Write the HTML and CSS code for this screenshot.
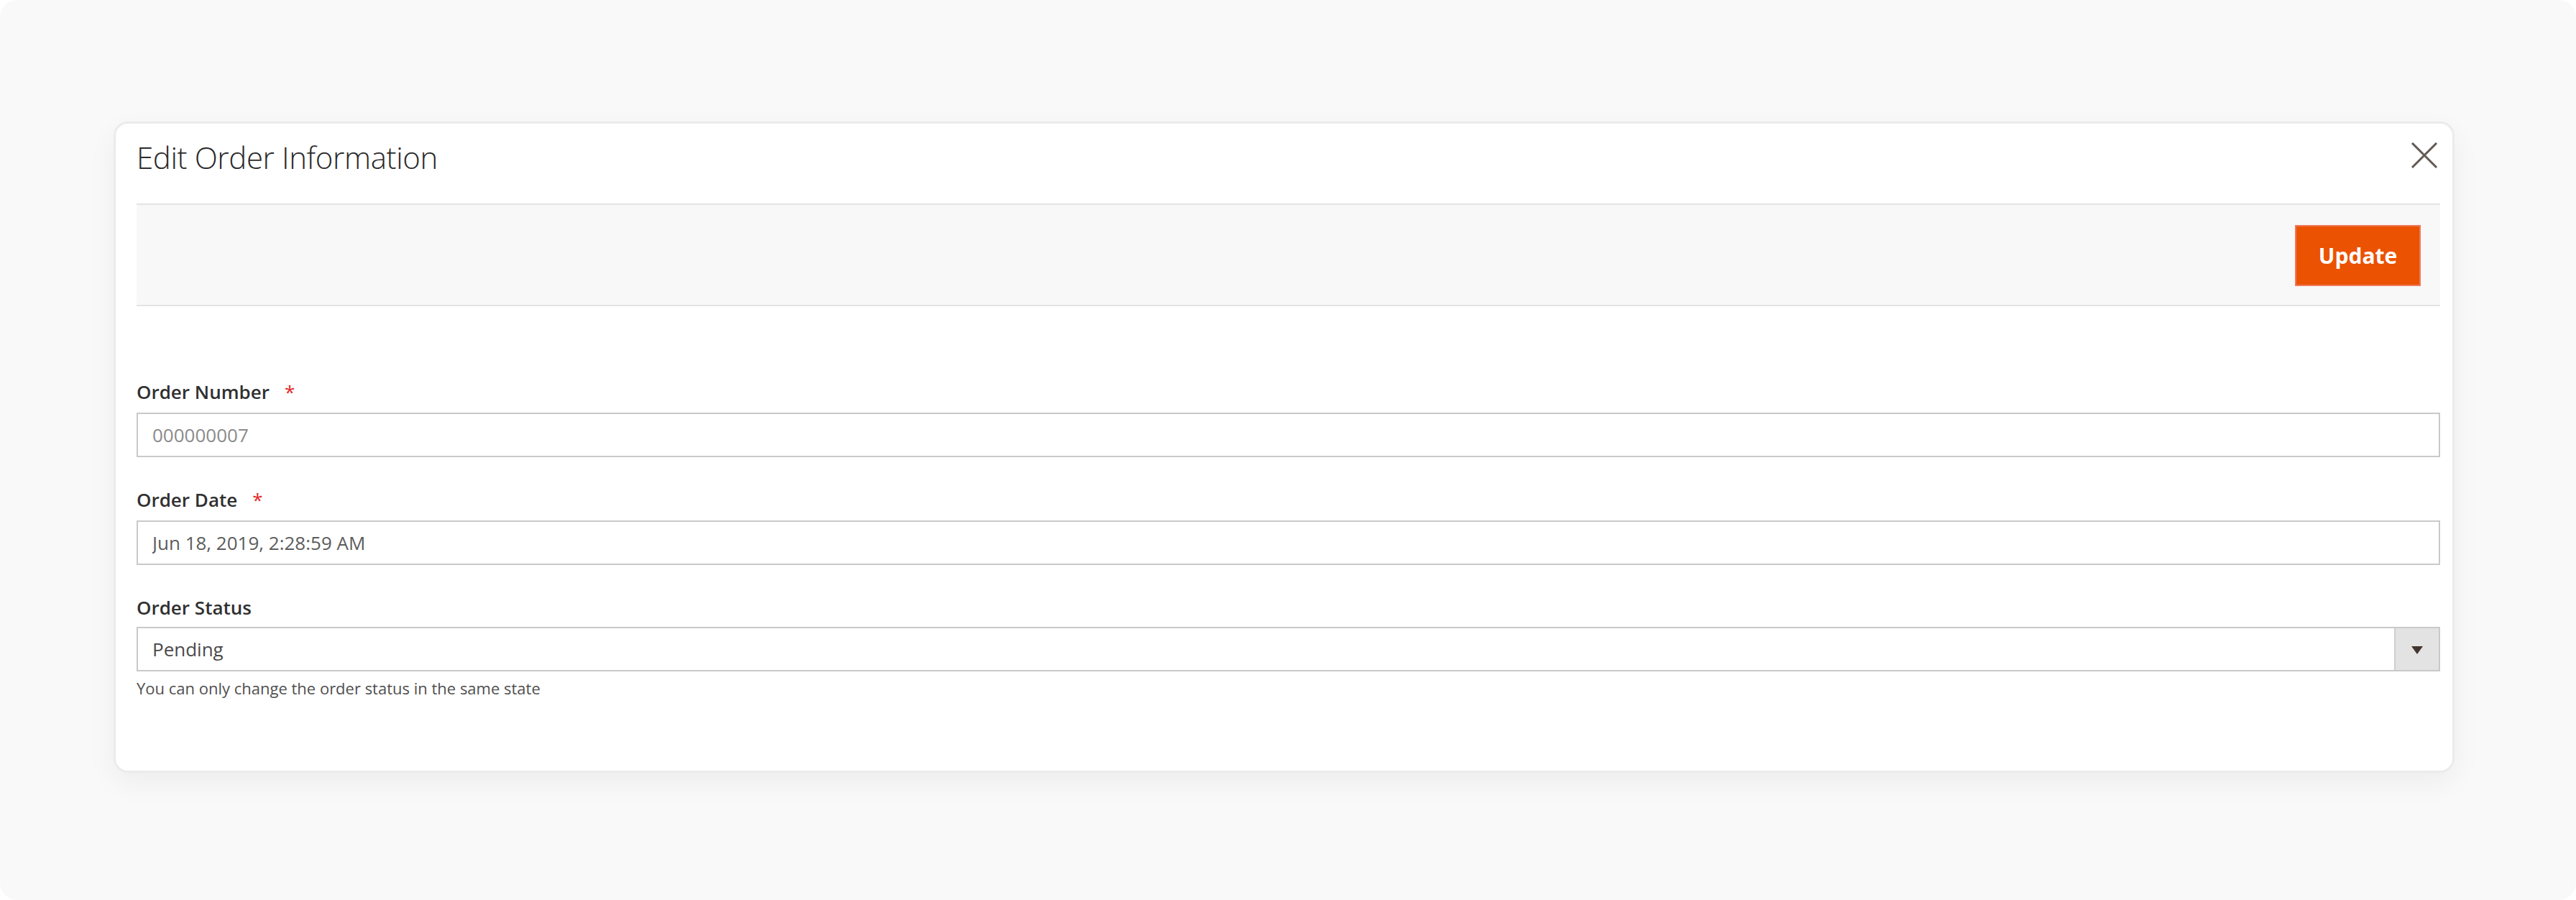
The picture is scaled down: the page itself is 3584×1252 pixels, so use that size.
FILE: index.html
```html
<!DOCTYPE html>
<html lang="en">
<head>
<meta charset="utf-8">
<title>Edit Order Information</title>
<link rel="stylesheet" href="styles.css">
</head>
<body>
<div class="frame">
  <div class="card">
    <header class="card-header">
      <h1 class="card-title">Edit Order Information</h1>
      <button class="close-btn" type="button" aria-label="Close">
        <svg viewBox="0 0 38 36" width="38" height="36">
          <path d="M2 1 L36 35 M36 1 L2 35" stroke="#625a55" stroke-width="3" fill="none"/>
        </svg>
      </button>
    </header>
    <div class="toolbar">
      <button class="btn-primary" type="button">Update</button>
    </div>
    <form class="form">
      <div class="field">
        <label class="field-label">Order Number<span class="req">*</span></label>
        <input class="field-input input-muted" type="text" value="000000007" readonly>
      </div>
      <div class="field">
        <label class="field-label">Order Date<span class="req">*</span></label>
        <input class="field-input input-date" type="text" value="Jun 18, 2019, 2:28:59 AM" readonly>
      </div>
      <div class="field">
        <label class="field-label">Order Status</label>
        <div class="select-wrap">
          <select class="field-select">
            <option>Pending</option>
          </select>
          <span class="select-arrow"><span class="triangle"></span></span>
        </div>
        <div class="field-note">You can only change the order status in the same state</div>
      </div>
    </form>
  </div>
</div>
</body>
</html>
```

FILE: styles.css
```css
* {
  box-sizing: border-box;
}

html, body {
  margin: 0;
  padding: 0;
  background: #ffffff;
}

body {
  font-family: "Open Sans", "Liberation Sans", sans-serif;
  color: #303030;
}

.frame {
  width: 3584px;
  height: 1252px;
  background: #f9f9f9;
  border-radius: 24px;
  padding: 169px 169px 0 158px;
}

.card {
  background: #ffffff;
  border: 3px solid #ebebeb;
  border-radius: 20px;
  box-shadow: 0 14px 40px rgba(0, 0, 0, 0.05);
  padding: 0 17px 100px 29px;
}

.card-header {
  display: flex;
  justify-content: space-between;
  align-items: flex-start;
  padding-top: 22px;
  margin-bottom: 39px;
}

.card-title {
  margin: 0;
  font-size: 42px;
  line-height: 50px;
  font-weight: 300;
  color: #2b2b2b;
  letter-spacing: -0.4px;
}

.close-btn {
  margin: 4px 3px 0 0;
  padding: 0;
  border: 0;
  background: transparent;
  width: 38px;
  height: 36px;
  display: block;
}

.close-btn svg {
  display: block;
}

.toolbar {
  display: flex;
  justify-content: flex-end;
  align-items: center;
  height: 143px;
  background: #f8f8f8;
  border-top: 2px solid #e4e4e4;
  border-bottom: 2px solid #e4e4e4;
  padding-right: 27px;
}

.btn-primary {
  height: 85px;
  width: 175px;
  margin-top: 2px;
  background: #eb5202;
  border: 2px solid #f07a5a;
  color: #ffffff;
  font-family: "Open Sans", "Liberation Sans", sans-serif;
  font-size: 30px;
  font-weight: 700;
  padding: 0;
}

.form {
  padding-top: 102px;
  display: flex;
  flex-direction: column;
  gap: 42px;
}

.field {
  display: flex;
  flex-direction: column;
}

.field-label {
  font-size: 26px;
  line-height: 34px;
  font-weight: 600;
  color: #303030;
  margin-bottom: 12px;
}

.req {
  color: #e22626;
  margin-left: 21px;
  font-weight: 400;
}

.field-input {
  height: 62px;
  width: 100%;
  border: 2px solid #c9c9c9;
  background: #ffffff;
  font-family: "Open Sans", "Liberation Sans", sans-serif;
  font-size: 26px;
  padding: 0 20px;
  outline: none;
}

.input-muted {
  color: #8a8a8a;
}

.input-date {
  color: #5c5c5c;
}

.select-wrap {
  display: flex;
  height: 62px;
  border: 2px solid #c9c9c9;
  margin-top: -2px;
}

.field-select {
  flex: 1;
  appearance: none;
  -webkit-appearance: none;
  border: 0;
  background: #ffffff;
  font-family: "Open Sans", "Liberation Sans", sans-serif;
  font-size: 26px;
  color: #4a4a4a;
  padding: 0 20px;
  outline: none;
}

.select-arrow {
  width: 62px;
  background: #e3e3e3;
  border-left: 2px solid #cfcfcf;
  display: flex;
  align-items: center;
  justify-content: center;
}

.triangle {
  width: 0;
  height: 0;
  border-left: 8px solid transparent;
  border-right: 8px solid transparent;
  border-top: 11px solid #41362f;
  margin-top: 2px;
}

.field-note {
  margin-top: 8px;
  font-size: 22px;
  line-height: 30px;
  color: #505050;
}
```
